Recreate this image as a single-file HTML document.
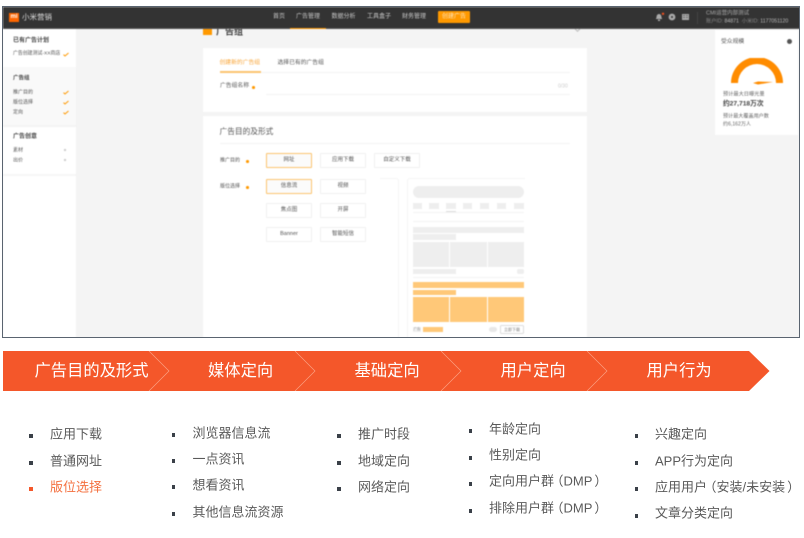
<!DOCTYPE html>
<html lang="zh"><head><meta charset="utf-8"><style>
html,body{margin:0;padding:0;background:#fff}
body{width:804px;height:538px;position:relative;overflow:hidden;font-family:"Liberation Sans","Noto Sans CJK SC",sans-serif}
.a{position:absolute}
.t{position:absolute;white-space:nowrap;line-height:1;transform:translateY(-50%)}
#shot{position:absolute;left:2px;top:6px;width:798px;height:332px;background:#f4f4f4;overflow:hidden;box-sizing:border-box;border:1px solid #5a6470}
#in{position:absolute;left:-3px;top:-7px;width:804px;height:345px;filter:blur(.45px)}
.n{color:#c9c9c9;font-size:6px}
.s{color:#555;font-size:5px}
.h{color:#4a4a4a;font-size:6px;font-weight:bold}
.ck{position:absolute;left:63px}
.btn{position:absolute;box-sizing:border-box;width:46px;height:15px;border:1px solid #f0f0f0;border-radius:1px;background:#fff;color:#555;font-size:5.5px;text-align:center;line-height:13px}
.on{border-color:#fbc36f;background:#fbfbfb}
.g{position:absolute;background:#eee}
.o{position:absolute;background:#ffc878}
.l{position:absolute;background:#f3f3f3;height:1px}
.li{position:absolute;white-space:nowrap;font-size:13px;line-height:1;color:#5a5a5a;transform:translateY(-50%)}
.p{margin-left:-3.5px}
.q{margin-left:2px}
.b{position:absolute;width:3.5px;height:3.5px;background:#3a4048}
.ar{position:absolute;color:#fff;font-size:16.3px;line-height:1;white-space:nowrap;transform:translateY(-50%)}
</style></head><body>
<div id="shot"><div id="in">
<div class="a" style="left:3px;top:29px;width:73px;height:309px;background:#fff"></div>
<div class="a" style="left:3px;top:67px;width:73px;height:58px;background:#f9f9f9"></div>
<div class="a" style="left:3px;top:125px;width:73px;height:2px;background:#f4f4f4"></div>
<div class="a" style="left:3px;top:174px;width:73px;height:2px;background:#f6f6f6"></div>
<div class="a" style="left:203px;top:48px;width:384px;height:64px;background:#fff"></div>
<div class="a" style="left:203px;top:116px;width:384px;height:222px;background:#fff"></div>
<div class="a" style="left:203px;top:27px;width:9px;height:8px;background:#f90"></div>
<div class="t" style="left:216px;top:32px;font-size:9px;font-weight:bold;color:#444">广告组</div>
<div class="a" style="left:575px;top:26px;width:5px;height:5px;border:1px solid #bbb;transform:rotate(45deg);box-sizing:border-box"></div>

<div class="a" style="left:3px;top:7px;width:800px;height:22px;background:#333;border-bottom:1px solid #555;box-sizing:border-box"></div>
<div class="a" style="left:9px;top:13px;width:10px;height:9px;background:#f60;color:#fff;font-size:6px;line-height:9px;text-align:center;font-weight:bold">mi</div>
<div class="t" style="left:22px;top:17px;font-size:7.5px;color:#ddd">小米营销</div>
<div class="t n" style="left:273px;top:16.5px">首页</div>
<div class="t n" style="left:296px;top:16.5px">广告管理</div>
<div class="a" style="left:290px;top:28px;width:36px;height:1px;background:#f90"></div>
<div class="t n" style="left:331.5px;top:16.5px">数据分析</div>
<div class="t n" style="left:367px;top:16.5px">工具盒子</div>
<div class="t n" style="left:402px;top:16.5px">财务管理</div>
<div class="a" style="left:438px;top:10.5px;width:32px;height:12px;background:#f90;border-radius:1px;color:#fde3b8;font-size:6px;line-height:12px;text-align:center">创建广告</div>
<svg class="a" style="left:655px;top:12px" width="36" height="10" viewBox="0 0 36 10"><path d="M4 2c-2 0-2.500 2-2.500 3.500L.8 7h6.400l-.7-1.500C6.500 4 6 2 4 2zM3 7.500h2V9H3z" fill="#aaa"/><circle cx="8" cy="1.800" r="1.200" fill="#f4511e"/><circle cx="17" cy="5" r="3.400" fill="#aaa"/><circle cx="17" cy="5" r="1" fill="#333"/><path d="M27 2h7v6h-7z" fill="#aaa"/><path d="M28 3.500h2M31 3.500h2M28 5.500h2M31 5.500h2" stroke="#333" stroke-width=".6"/></svg>
<div class="a" style="left:697px;top:12px;width:1px;height:12px;background:#444"></div>
<div class="t" style="left:706px;top:13.500px;font-size:5.500px;color:#aaa">CMI运营内部测试</div>
<div class="t" style="left:706px;top:21.500px;font-size:5.200px;color:#888">账户ID: <span style="color:#bbb">84871</span> &nbsp;小米ID: <span style="color:#bbb">1177051120</span></div>

<div class="t h" style="left:13px;top:41px">已有广告计划</div>
<div class="t s" style="left:13px;top:54.500px;font-size:4.900px">广告创建测试-XX商店</div><svg class="ck" style="top:52px" width="6" height="5" viewBox="0 0 6 5"><path d="M.5 2.600L2 4 5.500 1" fill="none" stroke="#f90" stroke-width="1"/></svg>
<div class="t h" style="left:13px;top:79px;font-size:5.500px">广告组</div>
<div class="t s" style="left:13px;top:92.500px">推广目的</div><svg class="ck" style="top:90px" width="6" height="5" viewBox="0 0 6 5"><path d="M.5 2.600L2 4 5.500 1" fill="none" stroke="#f90" stroke-width="1"/></svg>
<div class="t s" style="left:13px;top:102.500px">版位选择</div><svg class="ck" style="top:100px" width="6" height="5" viewBox="0 0 6 5"><path d="M.5 2.600L2 4 5.500 1" fill="none" stroke="#f90" stroke-width="1"/></svg>
<div class="t s" style="left:13px;top:112.500px">定向</div><svg class="ck" style="top:110px" width="6" height="5" viewBox="0 0 6 5"><path d="M.5 2.600L2 4 5.500 1" fill="none" stroke="#f90" stroke-width="1"/></svg>
<div class="t h" style="left:13px;top:137px">广告创意</div>
<div class="t s" style="left:13px;top:150.500px">素材</div><div class="a" style="left:64px;top:149px;width:2px;height:2px;background:#ccc"></div>
<div class="t s" style="left:13px;top:160.500px">出价</div><div class="a" style="left:64px;top:159px;width:2px;height:2px;background:#ccc"></div>

<div class="t" style="left:219.500px;top:64px;font-size:5.800px;color:#f9a63a">创建新的广告组</div>
<div class="t" style="left:277.500px;top:64px;font-size:5.800px;color:#555">选择已有的广告组</div>
<div class="l" style="left:220px;top:72px;width:350px"></div>
<div class="a" style="left:220px;top:71px;width:41px;height:1.500px;background:#fbc36f"></div>
<div class="t" style="left:220px;top:87px;font-size:5.800px;color:#555">广告组名称</div>
<div class="a" style="left:252px;top:86px;width:2.500px;height:2.500px;border-radius:50%;background:#f90"></div>
<div class="l" style="left:266px;top:94px;width:304px"></div>
<div class="t" style="left:558px;top:87px;font-size:5px;color:#ccc">0/30</div>
<div class="t" style="left:219.500px;top:132px;font-size:7.700px;color:#555">广告目的及形式</div>
<div class="l" style="left:220px;top:143px;width:350px"></div>
<div class="t" style="left:220px;top:161px;font-size:5px;color:#555">推广目的</div>
<div class="a" style="left:246px;top:160px;width:2.500px;height:2.500px;border-radius:50%;background:#f90"></div>
<div class="t" style="left:220px;top:187px;font-size:5px;color:#555">版位选择</div>
<div class="a" style="left:246px;top:186px;width:2.500px;height:2.500px;border-radius:50%;background:#f90"></div>
<div class="btn on" style="left:266px;top:153px">网址</div>
<div class="btn" style="left:320px;top:153px">应用下载</div>
<div class="btn" style="left:374px;top:153px">自定义下载</div>
<div class="btn on" style="left:266px;top:179px">信息流</div>
<div class="btn" style="left:320px;top:179px">视频</div>
<div class="btn" style="left:266px;top:203px">焦点图</div>
<div class="btn" style="left:320px;top:203px">开屏</div>
<div class="btn" style="left:266px;top:227px">Banner</div>
<div class="btn" style="left:320px;top:227px">智能短信</div>

<div class="a" style="left:380px;top:178px;width:19px;height:170px;border-right:1px solid #f5f5f5;border-top-right-radius:3px;box-sizing:border-box;border-top:1px solid #f5f5f5"></div>
<div class="a" style="left:407px;top:178px;width:118px;height:170px;border-left:1px solid #f5f5f5;border-top:1px solid #f5f5f5;border-top-left-radius:3px;box-sizing:border-box"></div>
<div class="g" style="left:413px;top:186px;width:111px;height:12px;border-radius:6px"></div>
<div class="g" style="left:413px;top:203px;width:9px;height:6px"></div><div class="g" style="left:429px;top:203px;width:10px;height:6px"></div><div class="g" style="left:446px;top:203px;width:10px;height:6px"></div><div class="g" style="left:463px;top:203px;width:9px;height:6px"></div><div class="g" style="left:480px;top:203px;width:9px;height:6px"></div><div class="g" style="left:497px;top:203px;width:9px;height:6px"></div><div class="g" style="left:514px;top:203px;width:10px;height:6px"></div>
<div class="l" style="left:413px;top:212px;width:111px"></div>
<div class="a" style="left:446px;top:211px;width:10px;height:1px;background:#ddd"></div>
<div class="l" style="left:413px;top:221px;width:111px"></div>
<div class="g" style="left:413px;top:227px;width:111px;height:6px"></div>
<div class="g" style="left:413px;top:234px;width:43px;height:6px"></div>
<div class="g" style="left:413px;top:242px;width:36px;height:25px"></div><div class="g" style="left:450px;top:242px;width:37px;height:25px"></div><div class="g" style="left:488px;top:242px;width:36px;height:25px"></div>
<div class="g" style="left:413px;top:269px;width:43px;height:5px"></div><div class="g" style="left:517px;top:269px;width:7px;height:5px;border-radius:2px"></div>
<div class="l" style="left:413px;top:277px;width:111px"></div>
<div class="o" style="left:413px;top:282px;width:111px;height:6px"></div>
<div class="o" style="left:413px;top:289.500px;width:43px;height:5.500px"></div>
<div class="o" style="left:413px;top:297px;width:36px;height:25px"></div><div class="o" style="left:450px;top:297px;width:37px;height:25px"></div><div class="o" style="left:488px;top:297px;width:36px;height:25px"></div>
<div class="a" style="left:413px;top:327px;width:8px;height:4.500px;background:#eee;color:#999;font-size:3.500px;line-height:4.500px;text-align:center">广告</div>
<div class="o" style="left:423px;top:327px;width:20px;height:4.500px"></div>
<div class="a" style="left:489px;top:327px;width:8px;height:4.500px;border-radius:3px;background:#e8e8e8"></div>
<div class="a" style="left:500px;top:325px;width:24px;height:9px;box-sizing:border-box;border:1px solid #ddd;border-radius:1.500px;color:#777;font-size:4px;line-height:7px;text-align:center;background:#fff">立即下载</div>

<div class="a" style="left:715px;top:30px;width:83px;height:105px;background:#fff"></div>
<div class="t" style="left:721px;top:43px;font-size:5.800px;color:#555">受众规模</div>
<div class="a" style="left:787px;top:38.500px;width:5px;height:5px;border-radius:50%;background:#555"></div>
<svg class="a" style="left:728px;top:58px" width="58" height="28" viewBox="0 0 58 28"><path d="M3 25a26 26 0 0 1 52 0h-7a19 19 0 0 0-38 0z" fill="#ff8c00"/><path d="M25 25l5-1.500L45 24l-15 2.500z" fill="#ff8c00"/></svg>
<div class="t" style="left:723px;top:95px;font-size:5.200px;color:#666">预计最大日曝光量</div>
<div class="t" style="left:723px;top:104.500px;font-size:6.700px;font-weight:bold;color:#444">约27,718万次</div>
<div class="t" style="left:723px;top:117px;font-size:5.100px;color:#666">预计最大覆盖用户数</div>
<div class="t" style="left:723px;top:125px;font-size:5.100px;color:#666">约6,162万人</div>
</div></div>

<svg class="a" style="left:3px;top:351px" width="767" height="40" viewBox="0 0 767 40"><path d="M0 0H746L766.500 20 746 40H0z" fill="#f4572a"/><g fill="none" stroke="#fba88c" stroke-width=".6"><path d="M146 0l20 20-20 20M292 0l20 20-20 20M438 0l20 20-20 20M584 0l20 20-20 20"/></g></svg>
<div class="ar" style="left:34.500px;top:371px">广告目的及形式</div>
<div class="ar" style="left:208px;top:371px">媒体定向</div>
<div class="ar" style="left:354.500px;top:371px">基础定向</div>
<div class="ar" style="left:500.500px;top:371px">用户定向</div>
<div class="ar" style="left:646.500px;top:371px">用户行为</div>

<div class="b" style="left:29px;top:434px"></div><div class="li" style="left:50px;top:434px">应用下载</div>
<div class="b" style="left:29px;top:461px"></div><div class="li" style="left:50px;top:461px">普通网址</div>
<div class="b" style="left:29px;top:487px;background:#f4572a"></div><div class="li" style="left:50px;top:487px;color:#f4703f">版位选择</div>

<div class="b" style="left:171.500px;top:433px"></div><div class="li" style="left:192.500px;top:433px">浏览器信息流</div>
<div class="b" style="left:171.500px;top:459px"></div><div class="li" style="left:192.500px;top:459px">一点资讯</div>
<div class="b" style="left:171.500px;top:485px"></div><div class="li" style="left:192.500px;top:485px">想看资讯</div>
<div class="b" style="left:171.500px;top:512px"></div><div class="li" style="left:192.500px;top:512px">其他信息流资源</div>

<div class="b" style="left:337px;top:434px"></div><div class="li" style="left:358px;top:434px">推广时段</div>
<div class="b" style="left:337px;top:461px"></div><div class="li" style="left:358px;top:461px">地域定向</div>
<div class="b" style="left:337px;top:487px"></div><div class="li" style="left:358px;top:487px">网络定向</div>

<div class="b" style="left:468.500px;top:429px"></div><div class="li" style="left:489px;top:428.500px">年龄定向</div>
<div class="b" style="left:468.500px;top:456px"></div><div class="li" style="left:489px;top:455px">性别定向</div>
<div class="b" style="left:468.500px;top:482px"></div><div class="li" style="left:489px;top:481px">定向用户群<span class="p">（</span>DMP<span class="q">）</span></div>
<div class="b" style="left:468.500px;top:509px"></div><div class="li" style="left:489px;top:508px">排除用户群<span class="p">（</span>DMP<span class="q">）</span></div>

<div class="b" style="left:634.500px;top:434px"></div><div class="li" style="left:655px;top:434px">兴趣定向</div>
<div class="b" style="left:634.500px;top:461px"></div><div class="li" style="left:655px;top:461px">APP行为定向</div>
<div class="b" style="left:634.500px;top:487px"></div><div class="li" style="left:655px;top:487px">应用用户<span class="p">（</span>安装/未安装<span class="q">）</span></div>
<div class="b" style="left:634.500px;top:514px"></div><div class="li" style="left:655px;top:513px">文章分类定向</div>
</body></html>
